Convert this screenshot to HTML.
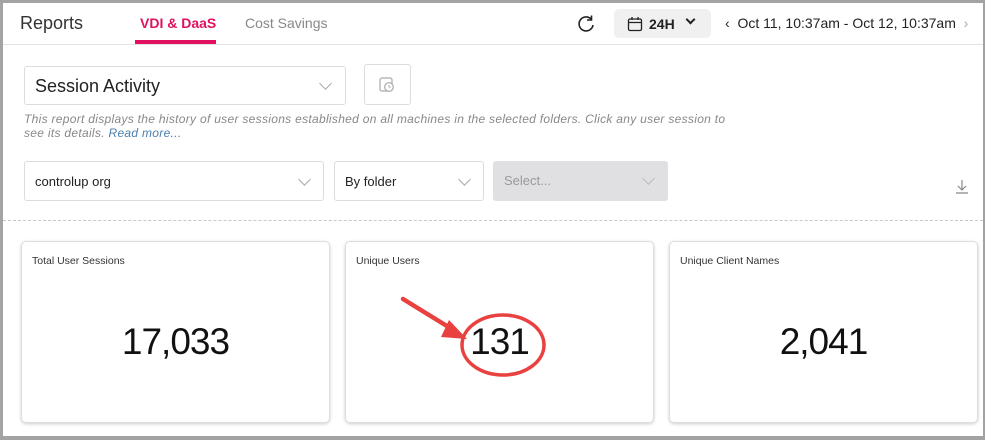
<!DOCTYPE html><html><head><style>
body{margin:0;width:985px;height:440px;background:#a3a3a3;font-family:"Liberation Sans",sans-serif;overflow:hidden}
.f{position:absolute;left:3px;top:3px;width:980px;height:433px;background:#fff}
.a{position:absolute}
.dd{position:absolute;border:1px solid #dcdcdc;border-radius:3px;background:#fff;box-sizing:border-box}
.chev{position:absolute;width:8px;height:8px;border-right:1.3px solid #aaa;border-bottom:1.3px solid #aaa;transform:rotate(45deg)}
.card{position:absolute;top:238px;width:309px;height:182px;border:1px solid #ddd;border-radius:5px;box-shadow:0 1px 3px rgba(0,0,0,.2);box-sizing:border-box}
.card .t{position:absolute;left:10px;top:13px;font-size:10.5px;color:#333}
.card .n{position:absolute;left:0;right:0;top:79px;text-align:center;font-size:37px;letter-spacing:-1px;color:#111}
</style></head><body><div class="f">
<div class="a" style="left:17px;top:10px;font-size:18px;color:#333">Reports</div>
<div class="a" style="left:137px;top:12px;font-size:14px;font-weight:bold;color:#e0115f">VDI &amp; DaaS</div>
<div class="a" style="left:132px;top:37px;width:81px;height:4px;background:#e0115f"></div>
<div class="a" style="left:242px;top:12px;font-size:14px;color:#888">Cost Savings</div>
<div class="a" style="left:0;top:41px;width:980px;height:1px;background:#e3e3e3"></div>
<svg class="a" style="left:573px;top:11px" width="20" height="20" viewBox="0 0 20 20"><path d="M15.5 5.5A7 7 0 1 0 17 11" fill="none" stroke="#222" stroke-width="1.6"/><path d="M15.5 1.5V6H11" fill="none" stroke="#222" stroke-width="1.6"/></svg>
<div class="a" style="left:611px;top:6px;width:97px;height:29px;background:#f0f0f0;border-radius:5px"></div>
<svg class="a" style="left:624px;top:13px" width="16" height="16" viewBox="0 0 16 16"><rect x="1.5" y="3" width="13" height="11.5" rx="1.5" fill="none" stroke="#222" stroke-width="1.3"/><path d="M1.5 6.5H14.5M5 1V4M11 1V4" stroke="#222" stroke-width="1.3"/></svg>
<div class="a" style="left:646px;top:13px;font-size:14px;font-weight:bold;color:#222">24H</div>
<div class="chev" style="left:684px;top:13px;border-color:#222;width:5px;height:5px;border-width:2px"></div>
<div class="a" style="left:722px;top:12px;font-size:14px;color:#222">‹ &nbsp;Oct 11, 10:37am - Oct 12, 10:37am &nbsp;<span style="color:#aaa">›</span></div>
<div class="dd" style="left:21px;top:63px;width:322px;height:39px"><span class="a" style="left:10px;top:9px;font-size:18px;color:#222">Session Activity</span><div class="chev" style="left:296px;top:12px"></div></div>
<div class="dd" style="left:361px;top:61px;width:47px;height:41px"><svg class="a" style="left:14px;top:12px" width="16" height="16" viewBox="0 0 16 16"><rect x="1" y="1" width="12" height="13" rx="2" fill="none" stroke="#aaa" stroke-width="1.2"/><circle cx="10" cy="10" r="4.3" fill="#fff" stroke="#aaa" stroke-width="1.2"/><path d="M10 8V10H11.5" stroke="#aaa" fill="none"/></svg></div>
<div class="a" style="left:21px;top:109px;width:800px;font-size:12px;font-style:italic;color:#888;line-height:14px;letter-spacing:0.3px">This report displays the history of user sessions established on all machines in the selected folders. Click any user session to<br>see its details. <span style="color:#4a7fb0">Read more...</span></div>
<div class="dd" style="left:21px;top:158px;width:300px;height:40px"><span class="a" style="left:10px;top:12px;font-size:13px;color:#222">controlup org</span><div class="chev" style="left:275px;top:13px"></div></div>
<div class="dd" style="left:331px;top:158px;width:150px;height:40px"><span class="a" style="left:10px;top:12px;font-size:13px;color:#222">By folder</span><div class="chev" style="left:125px;top:13px"></div></div>
<div class="a" style="left:490px;top:158px;width:175px;height:40px;background:#e0e0e3;border-radius:3px"><span class="a" style="left:11px;top:12px;font-size:13px;color:#999">Select...</span><div class="chev" style="left:151px;top:13px;border-color:#bbb"></div></div>
<svg class="a" style="left:952px;top:176px" width="14" height="16" viewBox="0 0 14 16"><path d="M7 1V11M3 7L7 11L11 7M1 14H13" fill="none" stroke="#888" stroke-width="1.2"/></svg>
<div class="a" style="left:0;top:217px;width:980px;border-top:1px dashed #c8c8c8"></div>
<div class="card" style="left:18px"><div class="t">Total User Sessions</div><div class="n">17,033</div></div>
<div class="card" style="left:342px"><div class="t">Unique Users</div><div class="n">131</div></div>
<div class="card" style="left:666px"><div class="t">Unique Client Names</div><div class="n">2,041</div></div>
<svg class="a" style="left:390px;top:290px" width="160" height="100" viewBox="0 0 160 100"><ellipse cx="110" cy="52" rx="41" ry="30" fill="none" stroke="#e8413f" stroke-width="3.5"/><path d="M10 6L62 38" stroke="#e8413f" stroke-width="4.5" stroke-linecap="round"/><path d="M56 27L74 46L48 44Z" fill="#e8413f"/></svg>
</div></body></html>
